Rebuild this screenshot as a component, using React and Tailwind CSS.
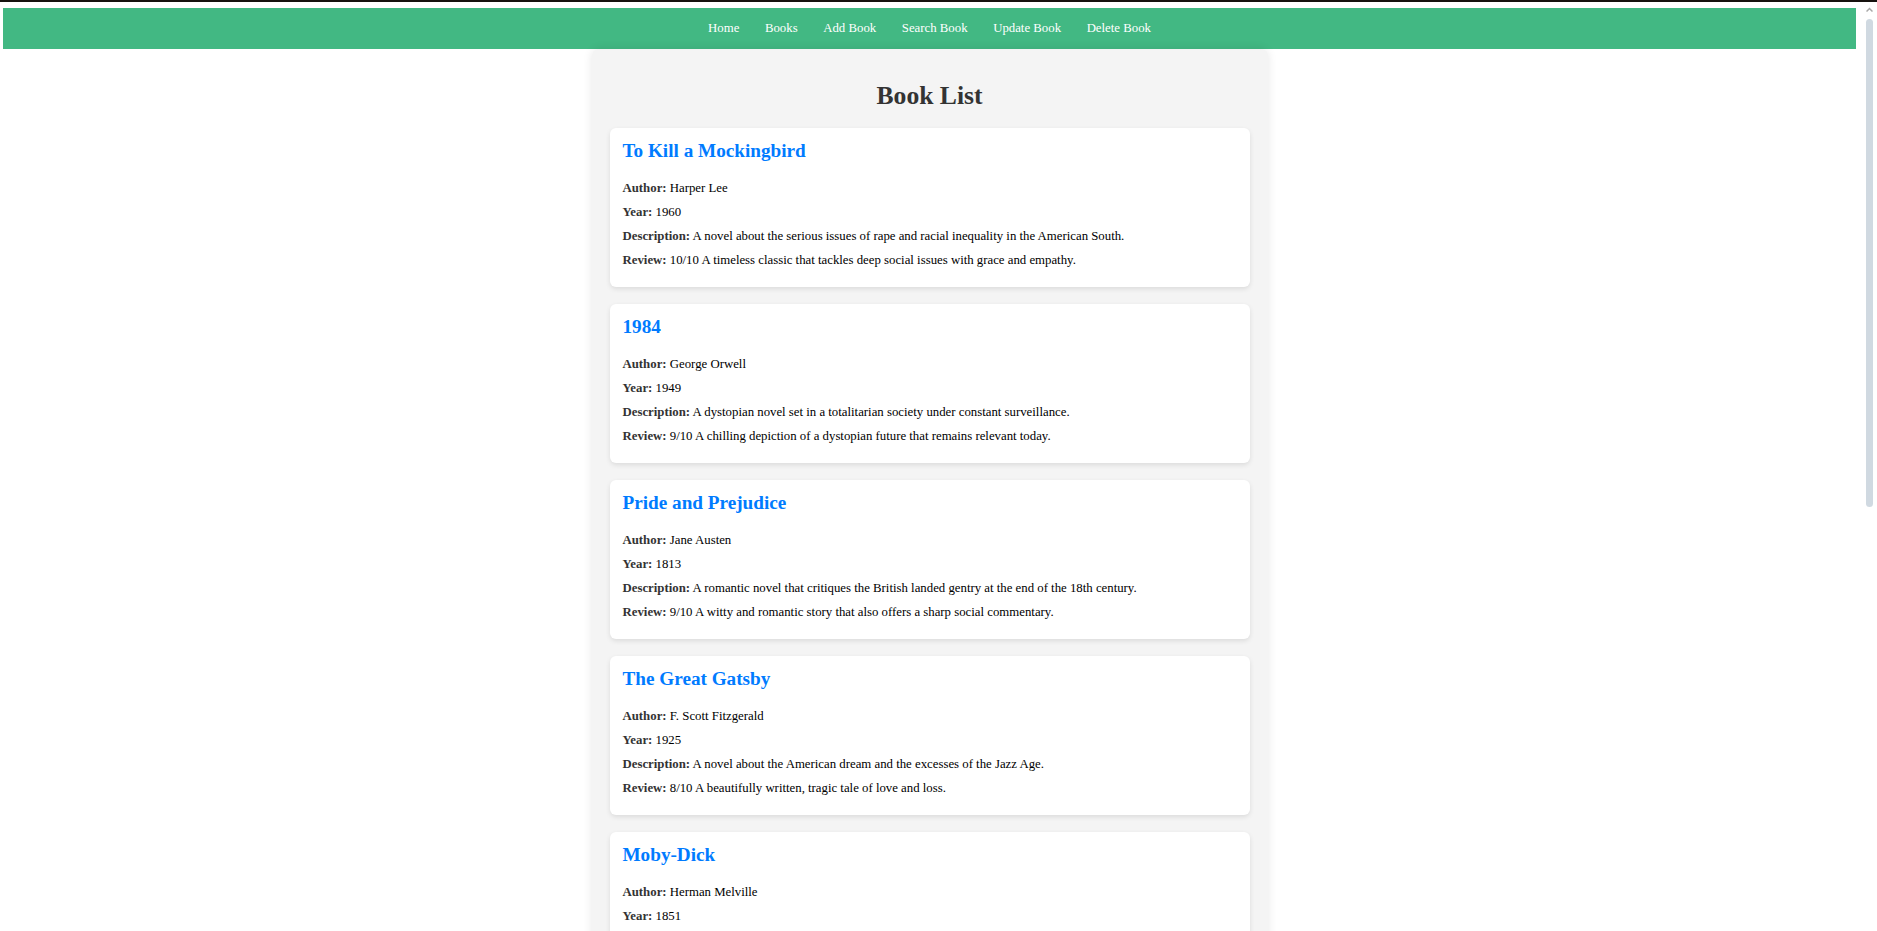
const links = ["Home", "Books", "Add Book", "Search Book", "Update Book", "Delete Book"];

const books = [
  {
    title: "To Kill a Mockingbird",
    author: "Harper Lee",
    year: 1960,
    description: "A novel about the serious issues of rape and racial inequality in the American South.",
    review: "10/10 A timeless classic that tackles deep social issues with grace and empathy.",
  },
  {
    title: "1984",
    author: "George Orwell",
    year: 1949,
    description: "A dystopian novel set in a totalitarian society under constant surveillance.",
    review: "9/10 A chilling depiction of a dystopian future that remains relevant today.",
  },
  {
    title: "Pride and Prejudice",
    author: "Jane Austen",
    year: 1813,
    description: "A romantic novel that critiques the British landed gentry at the end of the 18th century.",
    review: "9/10 A witty and romantic story that also offers a sharp social commentary.",
  },
  {
    title: "The Great Gatsby",
    author: "F. Scott Fitzgerald",
    year: 1925,
    description: "A novel about the American dream and the excesses of the Jazz Age.",
    review: "8/10 A beautifully written, tragic tale of love and loss.",
  },
  {
    title: "Moby-Dick",
    author: "Herman Melville",
    year: 1851,
    description: "The story of Captain Ahab's obsessive quest to hunt down the white whale.",
    review: "7/10 An epic and ambitious novel, though dense in places.",
  },
];

function BookCard({ book }) {
  return (
    <div className="bg-white rounded-[6px] shadow-[0_2px_5px_rgba(0,0,0,0.1)] px-[13px] pt-[12px] pb-[15px]">
      <h2 className="text-[19.2px] leading-[22px] font-bold text-[#007bff]">{book.title}</h2>
      <div className="mt-[14px] flex flex-col text-[12.8px] leading-[24px] text-black">
        <p>
          <strong className="text-[#333]">Author:</strong> {book.author}
        </p>
        <p>
          <strong className="text-[#333]">Year:</strong> {book.year}
        </p>
        <p>
          <strong className="text-[#333]">Description:</strong> {book.description}
        </p>
        <p>
          <strong className="text-[#333]">Review:</strong> {book.review}
        </p>
      </div>
    </div>
  );
}

export default function App() {
  return (
    <div className="h-[931px] w-full overflow-hidden bg-white flex flex-col font-['Liberation_Serif','Times_New_Roman',serif]">
      <div className="h-[2px] bg-[#16120f] shrink-0" />
      <div className="flex flex-1 min-h-0">
        <div className="flex-1 pl-[3px] pr-[10px] pt-[6px] min-w-0">
          <nav className="h-[41px] bg-[#42b883] flex items-center justify-center">
            {links.map((l) => (
              <a key={l} href="#" className="px-[12.8px] text-[12.8px] text-white">
                {l}
              </a>
            ))}
          </nav>
          <main className="w-[676px] mx-auto bg-[#f4f4f4] rounded-[8px] shadow-[0_0_10px_rgba(0,0,0,0.1)] px-[18px] pt-[32px] pb-[20px]">
            <h1 className="text-[25.6px] leading-[30px] font-bold text-[#333] text-center mb-[17px]">
              Book List
            </h1>
            <div className="flex flex-col gap-[17px]">
              {books.map((b) => (
                <BookCard key={b.title} book={b} />
              ))}
            </div>
          </main>
        </div>
        <div className="w-[11px] shrink-0 flex flex-col pt-[5px]">
          <svg width="7" height="6" viewBox="0 0 7 6" className="ml-0">
            <path d="M0.5 4.5 L3.5 1.5 L6.5 4.5" fill="none" stroke="#a8a8a8" strokeWidth="1.5" />
          </svg>
          <div className="mt-[6px] w-[7px] h-[488px] rounded-full bg-[#d0d9e1]" />
        </div>
      </div>
    </div>
  );
}
